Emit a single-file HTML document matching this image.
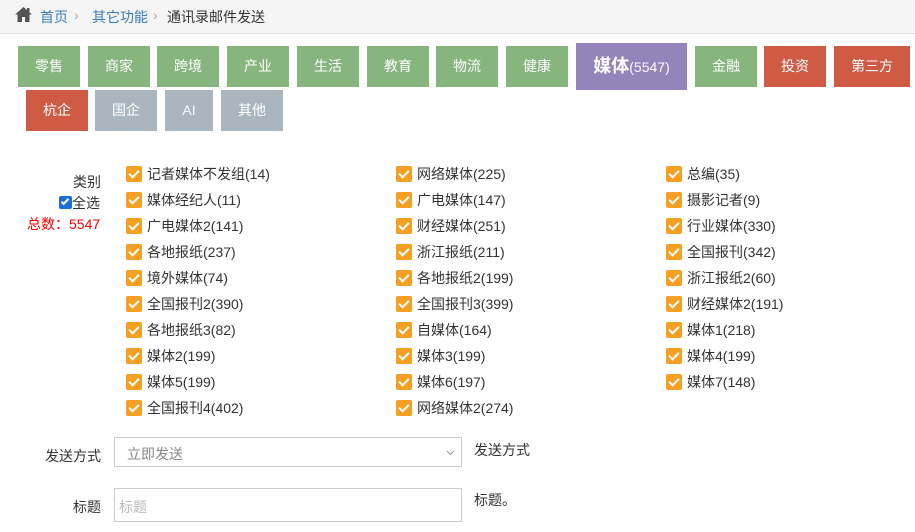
<!DOCTYPE html>
<html><head><meta charset="utf-8"><style>
*{margin:0;padding:0;box-sizing:border-box}
body{width:915px;height:532px;background:#fff;font-family:"Liberation Sans","Noto Sans CJK SC",sans-serif;color:#333;position:relative;overflow:hidden;font-size:14px}
.hdr{position:absolute;left:0;top:0;width:915px;height:34px;background:#f5f5f5;border-bottom:1px solid #e2e2e2}
.hdr span{position:absolute;top:7px;font-size:14px}
.b{position:absolute;color:#fff;font-size:14px;text-align:center;line-height:41px;height:41px}
.g{background:#86b67e}.r{background:#d05b45}.s{background:#aab6bf}
.cb{position:absolute;font-size:14px;line-height:16px;white-space:nowrap}
.cb i{position:absolute;left:0;top:0;width:16px;height:16px;background:#f5a023;border-radius:2px}
.cb i:after{content:"";position:absolute;left:5px;top:2px;width:4px;height:8px;border:solid #fff;border-width:0 2px 2px 0;transform:rotate(45deg)}
.cb b{font-weight:normal;position:absolute;left:21px;top:0}
.lb{position:absolute;font-size:14px}
.inp{position:absolute;border:1px solid #ccc;background:#fff;font-size:14px;color:#999}
</style></head><body>
<div class="hdr">
<svg style="position:absolute;left:15px;top:7px" width="17" height="15" viewBox="0 0 17 15"><path d="M8.5 0L0 7.5h2.5V15h4.5v-5h3v5h4.5V7.5H17z" fill="#555"/><rect x="12" y="1" width="2.5" height="4" fill="#555"/></svg>
<span style="left:40px;color:#3a7dbf">首页</span>
<span style="left:74px;color:#aaa">›</span>
<span style="left:92px;color:#3a7dbf">其它功能</span>
<span style="left:153px;color:#aaa">›</span>
<span style="left:167px;color:#333">通讯录邮件发送</span>
</div>
<div class="b g" style="left:18px;top:46px;width:62px">零售</div>
<div class="b g" style="left:88px;top:46px;width:62px">商家</div>
<div class="b g" style="left:157px;top:46px;width:62px">跨境</div>
<div class="b g" style="left:227px;top:46px;width:62px">产业</div>
<div class="b g" style="left:297px;top:46px;width:62px">生活</div>
<div class="b g" style="left:367px;top:46px;width:62px">教育</div>
<div class="b g" style="left:436px;top:46px;width:62px">物流</div>
<div class="b g" style="left:506px;top:46px;width:62px">健康</div>
<div class="b" style="left:576px;top:43px;width:111px;height:47px;line-height:47px;background:#9484bb"><span style="font-size:18px;font-weight:bold">媒体</span>(5547)</div>
<div class="b g" style="left:695px;top:46px;width:62px">金融</div>
<div class="b r" style="left:764px;top:46px;width:62px">投资</div>
<div class="b r" style="left:834px;top:46px;width:76px">第三方</div>
<div class="b r" style="left:26px;top:90px;width:62px">杭企</div>
<div class="b s" style="left:95px;top:90px;width:62px">国企</div>
<div class="b s" style="left:165px;top:90px;width:48px">AI</div>
<div class="b s" style="left:221px;top:90px;width:62px">其他</div>

<div class="lb" style="left:73px;top:172px">类别</div>
<div class="lb" style="left:59px;top:193px"><span style="display:inline-block;width:13px;height:13px;background:#1a6fd8;border-radius:2px;vertical-align:-1px;position:relative"><span style="position:absolute;left:4px;top:1px;width:4px;height:8px;border:solid #fff;border-width:0 2px 2px 0;transform:rotate(45deg)"></span></span>全选</div>
<div class="lb" style="left:27px;top:214px;color:#f00">总数：5547</div>

<div class="cb" style="left:126px;top:166px"><i></i><b>记者媒体不发组(14)</b></div>
<div class="cb" style="left:126px;top:192px"><i></i><b>媒体经纪人(11)</b></div>
<div class="cb" style="left:126px;top:218px"><i></i><b>广电媒体2(141)</b></div>
<div class="cb" style="left:126px;top:244px"><i></i><b>各地报纸(237)</b></div>
<div class="cb" style="left:126px;top:270px"><i></i><b>境外媒体(74)</b></div>
<div class="cb" style="left:126px;top:296px"><i></i><b>全国报刊2(390)</b></div>
<div class="cb" style="left:126px;top:322px"><i></i><b>各地报纸3(82)</b></div>
<div class="cb" style="left:126px;top:348px"><i></i><b>媒体2(199)</b></div>
<div class="cb" style="left:126px;top:374px"><i></i><b>媒体5(199)</b></div>
<div class="cb" style="left:126px;top:400px"><i></i><b>全国报刊4(402)</b></div>

<div class="cb" style="left:396px;top:166px"><i></i><b>网络媒体(225)</b></div>
<div class="cb" style="left:396px;top:192px"><i></i><b>广电媒体(147)</b></div>
<div class="cb" style="left:396px;top:218px"><i></i><b>财经媒体(251)</b></div>
<div class="cb" style="left:396px;top:244px"><i></i><b>浙江报纸(211)</b></div>
<div class="cb" style="left:396px;top:270px"><i></i><b>各地报纸2(199)</b></div>
<div class="cb" style="left:396px;top:296px"><i></i><b>全国报刊3(399)</b></div>
<div class="cb" style="left:396px;top:322px"><i></i><b>自媒体(164)</b></div>
<div class="cb" style="left:396px;top:348px"><i></i><b>媒体3(199)</b></div>
<div class="cb" style="left:396px;top:374px"><i></i><b>媒体6(197)</b></div>
<div class="cb" style="left:396px;top:400px"><i></i><b>网络媒体2(274)</b></div>

<div class="cb" style="left:666px;top:166px"><i></i><b>总编(35)</b></div>
<div class="cb" style="left:666px;top:192px"><i></i><b>摄影记者(9)</b></div>
<div class="cb" style="left:666px;top:218px"><i></i><b>行业媒体(330)</b></div>
<div class="cb" style="left:666px;top:244px"><i></i><b>全国报刊(342)</b></div>
<div class="cb" style="left:666px;top:270px"><i></i><b>浙江报纸2(60)</b></div>
<div class="cb" style="left:666px;top:296px"><i></i><b>财经媒体2(191)</b></div>
<div class="cb" style="left:666px;top:322px"><i></i><b>媒体1(218)</b></div>
<div class="cb" style="left:666px;top:348px"><i></i><b>媒体4(199)</b></div>
<div class="cb" style="left:666px;top:374px"><i></i><b>媒体7(148)</b></div>

<div class="lb" style="left:45px;top:446px">发送方式</div>
<div class="inp" style="left:114px;top:437px;width:348px;height:30px;color:#888;padding:6px 12px">立即发送
<svg style="position:absolute;right:6px;top:12px" width="9" height="6" viewBox="0 0 9 6"><path d="M1 1l3.5 3.5L8 1" fill="none" stroke="#999" stroke-width="1"/></svg></div>
<div class="lb" style="left:474px;top:440px">发送方式</div>
<div class="lb" style="left:73px;top:497px">标题</div>
<div class="inp" style="left:114px;top:488px;width:348px;height:34px;color:#bbb;padding:8px 4px">标题</div>
<div class="lb" style="left:474px;top:490px">标题。</div>
</body></html>
